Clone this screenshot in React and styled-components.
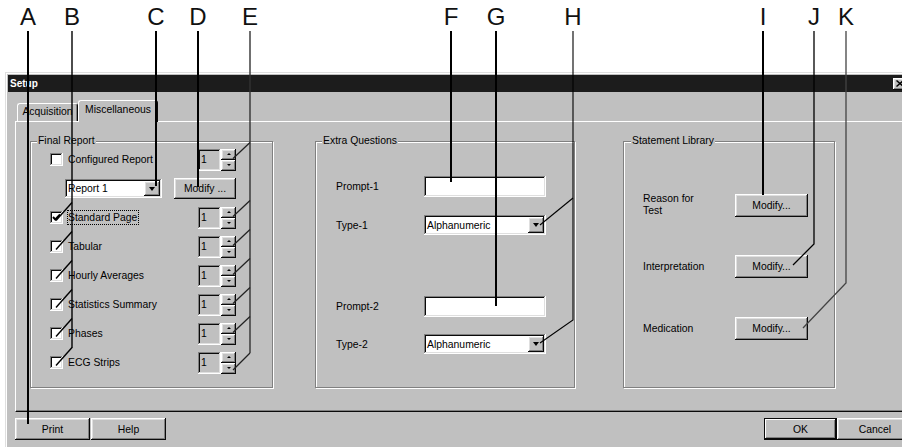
import React from 'react';
import styled, { createGlobalStyle } from 'styled-components';

const GlobalStyle = createGlobalStyle`
  html, body { margin: 0; padding: 0; background: #fff; overflow: hidden; }
  body { font-family: "Liberation Sans", Arial, sans-serif; }
  * { box-sizing: border-box; }
`;

const raised = `
  box-shadow: inset -1px -1px #0a0a0a, inset 1px 1px #fff, inset -2px -2px #808080, inset 2px 2px #dfdfdf;
`;
const sunken = `
  box-shadow: inset -1px -1px #fff, inset 1px 1px #808080, inset -2px -2px #dfdfdf, inset 2px 2px #0a0a0a;
`;

const Page = styled.div`
  position: relative;
  width: 902px;
  height: 447px;
  overflow: hidden;
  padding: 72px 0 0 5px;
`;

const Dialog = styled.div`
  width: 910px;
  height: 384px;
  background: #c0c0c0;
  border-top: 1px solid #dfdfdf;
  border-left: 1px solid #dfdfdf;
  box-shadow: inset 1px 1px #fff;
  padding: 2px 2px 0 2px;
  display: flex;
  flex-direction: column;
  font-size: 10.4px;
  color: #000;
`;

const TitleBar = styled.div`
  height: 17px;
  background: #1c1c1c;
  display: flex;
  align-items: center;
  justify-content: space-between;
  padding: 0 6px 0 2px;
`;

const Title = styled.span`
  color: #fff;
  font-weight: bold;
  font-size: 10px;
`;

const CloseBtn = styled.div`
  width: 14px;
  height: 12px;
  background: #c0c0c0;
  ${raised}
  display: flex;
  align-items: center;
  justify-content: center;
`;

const Body = styled.div`
  flex: 1;
  display: flex;
  flex-direction: column;
  padding: 5px 0 0 7px;
`;

const TabStrip = styled.div`
  height: 24px;
  display: flex;
  align-items: flex-end;
  padding-left: 2px;
`;

const Tab = styled.div`
  position: relative;
  z-index: ${p => (p.$active ? 2 : 1)};
  width: ${p => p.$w}px;
  height: ${p => (p.$active ? 22 : 18)}px;
  margin-bottom: ${p => (p.$active ? -1 : 0)}px;
  background: #c0c0c0;
  border-top: 1px solid #fff;
  border-left: 1px solid #fff;
  border-right: 1px solid #0a0a0a;
  border-radius: 3px 3px 0 0;
  box-shadow: inset -1px 0 #808080;
  display: flex;
  justify-content: center;
  padding-top: ${p => (p.$active ? 3 : 2)}px;
  line-height: 12px;
`;

const Panel = styled.div`
  height: 291px;
  border-top: 1px solid #fff;
  border-left: 1px solid #fff;
  border-bottom: 1px solid #0a0a0a;
  border-right: 1px solid #0a0a0a;
  box-shadow: inset -1px -1px #808080;
  display: flex;
  align-items: flex-start;
  padding: 19px 0 0 14px;
`;

const Group = styled.div`
  position: relative;
  width: ${p => p.$w}px;
  height: 247px;
  margin-left: ${p => p.$ml || 0}px;
  border: 1px solid #808080;
  box-shadow: inset 1px 1px #fff, 1px 1px #fff;
  padding: ${p => p.$pad};
  display: flex;
  flex-direction: column;
`;

const GroupLabel = styled.span`
  position: absolute;
  top: -7px;
  left: ${p => p.$l || 6}px;
  padding: 0 1px;
  background: #c0c0c0;
  line-height: 12px;
`;

const CheckRow = styled.div`
  height: 29px;
  display: flex;
  align-items: center;
`;

const Box = styled.div`
  width: 13px;
  height: 13px;
  background: #fff;
  ${sunken}
  flex-shrink: 0;
  display: flex;
`;

const CheckText = styled.span`
  margin-left: ${p => (p.$focus ? 4 : 5)}px;
  border: ${p => (p.$focus ? '1px dotted #000' : 'none')};
  padding: ${p => (p.$focus ? '0 1px 0 0' : '0')};
  line-height: 13px;
`;

const Spinner = styled.div`
  margin-left: auto;
  display: flex;
`;

const SpinEdit = styled.div`
  width: 23px;
  height: 22px;
  background: #c0c0c0;
  ${sunken}
  padding: 4px 0 0 3px;
  line-height: 13px;
`;

const SpinButtons = styled.div`
  display: flex;
  flex-direction: column;
`;

const SpinBtn = styled.div`
  width: 15px;
  height: 11px;
  background: #c0c0c0;
  ${raised}
  display: flex;
  align-items: center;
  justify-content: center;
`;

const Tri = styled.div`
  width: 0;
  height: 0;
  border-left: ${p => p.$s}px solid transparent;
  border-right: ${p => p.$s}px solid transparent;
  ${p => (p.$up ? 'border-bottom' : 'border-top')}: ${p => Math.ceil(p.$s * 0.9)}px solid #000;
`;

const Combo = styled.div`
  width: ${p => p.$w}px;
  height: ${p => p.$h}px;
  margin-left: ${p => p.$ml || 0}px;
  background: #fff;
  ${sunken}
  display: flex;
  align-items: center;
  justify-content: space-between;
  padding: 2px 2px 2px 3px;
  line-height: 13px;
`;

const ComboArrow = styled.div`
  width: 16px;
  height: 100%;
  background: #c0c0c0;
  ${raised}
  display: flex;
  align-items: center;
  justify-content: center;
`;

const Button = styled.div`
  width: ${p => p.$w}px;
  height: ${p => p.$h || 22}px;
  margin-left: ${p => p.$ml || 0}px;
  background: #c0c0c0;
  ${raised}
  ${p => (p.$def ? 'outline: 1px solid #0a0a0a; outline-offset: -1px; box-shadow: inset -2px -2px #0a0a0a, inset 2px 2px #fff, inset -3px -3px #808080, inset 1px 1px #0a0a0a;' : '')}
  display: flex;
  align-items: center;
  justify-content: center;
  line-height: 13px;
  flex-shrink: 0;
`;

const Field = styled.div`
  display: grid;
  grid-template-columns: 88px 122px;
  align-items: center;
  margin-top: ${p => p.$mt || 0}px;
`;

const TextInput = styled.div`
  height: ${p => p.$h}px;
  background: #fff;
  ${sunken}
`;

const StmtRows = styled.div`
  display: flex;
  flex-direction: column;
  gap: 39px;
`;

const StmtRow = styled.div`
  display: grid;
  grid-template-columns: 92px 73px;
  align-items: center;
  height: 23px;
  line-height: 12px;
`;

const BottomBar = styled.div`
  display: flex;
  align-items: flex-start;
  justify-content: space-between;
  padding-top: 6px;
`;

const BtnGroup = styled.div`
  display: flex;
`;

const Callouts = styled.div`
  position: absolute;
  inset: 0;
  pointer-events: none;
  z-index: 10;
`;

const Letter = styled.span`
  position: absolute;
  top: 5px;
  left: ${p => p.$x}px;
  transform: translateX(-50%);
  font-family: "Liberation Sans", Arial, sans-serif;
  font-size: 24px;
  line-height: 24px;
  color: #111;
`;

const LineLayer = styled.svg`
  position: absolute;
  left: 0;
  top: 0;
`;

const rowsY = [159.5, 188.5, 217.5, 246.5, 275.5, 304.5, 333.5, 362.5];
const checkRows = [217.5, 246.5, 275.5, 304.5, 333.5, 362.5];
const spinRows = [159.5, 217.5, 246.5, 275.5, 304.5, 333.5];

const lines = [
  { pts: [[28, 31], [28, 424]], w: 2 },
  { pts: [[72, 31], [72, 348]], w: 1.4 },
  ...checkRows.map(y => ({ pts: [[72, y - 15], [56, y + 3]], w: 1.4 })),
  { pts: [[156, 31], [156, 186]], w: 2 },
  { pts: [[198, 31], [198, 187]], w: 2 },
  { pts: [[250, 31], [250, 353]], w: 1.4, c: '#333' },
  ...spinRows.map(y => ({ pts: [[250, y - 17], [233, y - 1]], w: 1.3, c: '#222' })),
  { pts: [[250, 353], [233, 370]], w: 1.3, c: '#222' },
  { pts: [[451, 31], [451, 182]], w: 2 },
  { pts: [[496, 31], [496, 306]], w: 2 },
  { pts: [[573, 31], [573, 320], [540, 343]], w: 1.1 },
  { pts: [[573, 198], [540, 225]], w: 1.1 },
  { pts: [[763, 31], [763, 195]], w: 2 },
  { pts: [[814, 31], [814, 244], [793, 265]], w: 1.3 },
  { pts: [[846, 31], [846, 283], [803, 328]], w: 1.3, c: '#444' },
];

const letters = [
  ['A', 28], ['B', 72], ['C', 156], ['D', 198], ['E', 250], ['F', 451],
  ['G', 496], ['H', 573], ['I', 763], ['J', 814], ['K', 846],
];

const Check = () => (
  <svg width="13" height="13" viewBox="0 0 13 13">
    <path d="M3 6 L5.3 8.5 L10 3.5" stroke="#000" strokeWidth="1.9" fill="none" />
  </svg>
);

const SpinBox = () => (
  <Spinner>
    <SpinEdit>1</SpinEdit>
    <SpinButtons>
      <SpinBtn><Tri $up $s={2} /></SpinBtn>
      <SpinBtn><Tri $s={2} /></SpinBtn>
    </SpinButtons>
  </Spinner>
);

const DropDown = ({ w, h, ml, children }) => (
  <Combo $w={w} $h={h} $ml={ml}>
    <span>{children}</span>
    <ComboArrow><Tri $s={3.5} /></ComboArrow>
  </Combo>
);

const reportItems = [
  { t: 'Standard Page', checked: true, focus: true },
  { t: 'Tabular' },
  { t: 'Hourly Averages' },
  { t: 'Statistics Summary' },
  { t: 'Phases' },
  { t: 'ECG Strips' },
];

export default function App() {
  return (
    <>
      <GlobalStyle />
      <Page>
        <Dialog>
          <TitleBar>
            <Title>Setup</Title>
            <CloseBtn>
              <svg width="8" height="7" viewBox="0 0 8 7">
                <path d="M0.5 0.5 L7.5 6.5 M7.5 0.5 L0.5 6.5" stroke="#000" strokeWidth="1.4" />
              </svg>
            </CloseBtn>
          </TitleBar>
          <Body>
            <TabStrip>
              <Tab $w={61}>Acquisition</Tab>
              <Tab $w={80} $active>Miscellaneous</Tab>
            </TabStrip>
            <Panel>
              <Group $w={243} $pad="3px 36px 0 19px">
                <GroupLabel>Final Report</GroupLabel>
                <CheckRow>
                  <Box />
                  <CheckText>Configured Report</CheckText>
                  <SpinBox />
                </CheckRow>
                <CheckRow>
                  <DropDown w={97} h={19} ml={15}>Report 1</DropDown>
                  <Button $w={62} $h={21} $ml={12}>Modify ...</Button>
                </CheckRow>
                {reportItems.map(it => (
                  <CheckRow key={it.t}>
                    <Box>{it.checked && <Check />}</Box>
                    <CheckText $focus={it.focus}>{it.t}</CheckText>
                    <SpinBox />
                  </CheckRow>
                ))}
              </Group>
              <Group $w={260} $ml={42} $pad="34px 0 0 20px">
                <GroupLabel>Extra Questions</GroupLabel>
                <Field>
                  <span>Prompt-1</span>
                  <TextInput $h={21} />
                </Field>
                <Field $mt={18}>
                  <span>Type-1</span>
                  <DropDown w={122} h={20}>Alphanumeric</DropDown>
                </Field>
                <Field $mt={61}>
                  <span>Prompt-2</span>
                  <TextInput $h={21} />
                </Field>
                <Field $mt={17}>
                  <span>Type-2</span>
                  <DropDown w={122} h={20}>Alphanumeric</DropDown>
                </Field>
              </Group>
              <Group $w={212} $ml={48} $pad="51px 0 0 19px">
                <GroupLabel $l={7}>Statement Library</GroupLabel>
                <StmtRows>
                  <StmtRow>
                    <span>Reason for<br />Test</span>
                    <Button $w={73} $h={23}>Modify...</Button>
                  </StmtRow>
                  <StmtRow>
                    <span>Interpretation</span>
                    <Button $w={73} $h={23}>Modify...</Button>
                  </StmtRow>
                  <StmtRow>
                    <span>Medication</span>
                    <Button $w={73} $h={23}>Modify...</Button>
                  </StmtRow>
                </StmtRows>
              </Group>
            </Panel>
            <BottomBar>
              <BtnGroup>
                <Button $w={75}>Print</Button>
                <Button $w={75} $ml={1}>Help</Button>
              </BtnGroup>
              <BtnGroup>
                <Button $w={73} $def>OK</Button>
                <Button $w={76}>Cancel</Button>
              </BtnGroup>
            </BottomBar>
          </Body>
        </Dialog>
        <Callouts>
          {letters.map(([l, x]) => (
            <Letter key={l} $x={x}>{l}</Letter>
          ))}
          <LineLayer width="902" height="447">
            {lines.map((ln, i) => (
              <polyline
                key={i}
                points={ln.pts.map(p => p.join(',')).join(' ')}
                fill="none"
                stroke={ln.c || '#000'}
                strokeWidth={ln.w}
              />
            ))}
          </LineLayer>
        </Callouts>
      </Page>
    </>
  );
}
